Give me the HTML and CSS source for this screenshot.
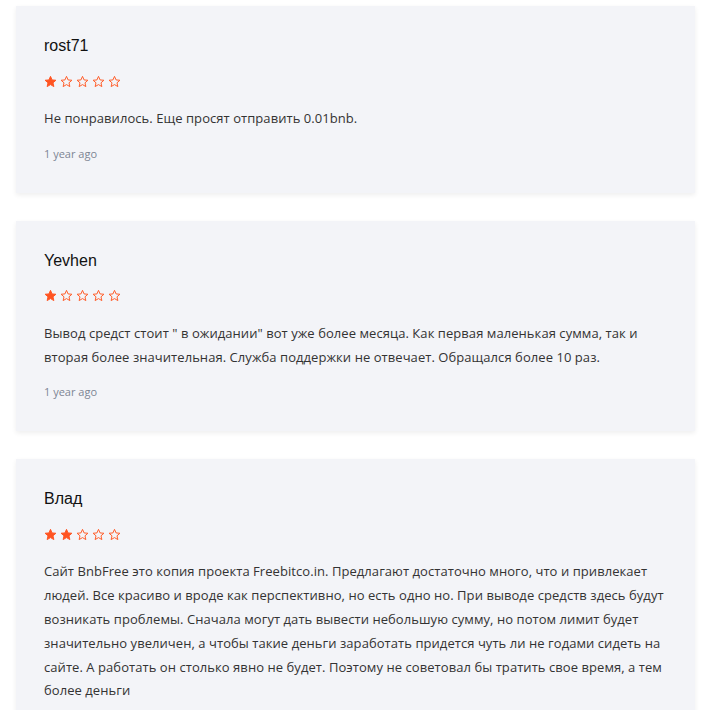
FILE: index.html
```html
<!DOCTYPE html>
<html lang="ru">
<head>
    <meta charset="UTF-8">
    <meta name="viewport" content="width=device-width, initial-scale=1.0">
    <title>Отзывы</title>
    <link rel="stylesheet" href="styles.css">
</head>
<body>

<div class="reviews">
    <div class="review">
        <div class="review-name">rost71</div>
        <div class="review-stars">
            <svg class="star on" viewBox="0 0 24 24"><path d="M12 2.5l2.9 6.6 7.1.6-5.4 4.7 1.6 7-6.2-3.7-6.2 3.7 1.6-7L2 9.7l7.1-.6z"/></svg>
            <svg class="star" viewBox="0 0 24 24"><path d="M12 2.5l2.9 6.6 7.1.6-5.4 4.7 1.6 7-6.2-3.7-6.2 3.7 1.6-7L2 9.7l7.1-.6z"/></svg>
            <svg class="star" viewBox="0 0 24 24"><path d="M12 2.5l2.9 6.6 7.1.6-5.4 4.7 1.6 7-6.2-3.7-6.2 3.7 1.6-7L2 9.7l7.1-.6z"/></svg>
            <svg class="star" viewBox="0 0 24 24"><path d="M12 2.5l2.9 6.6 7.1.6-5.4 4.7 1.6 7-6.2-3.7-6.2 3.7 1.6-7L2 9.7l7.1-.6z"/></svg>
            <svg class="star" viewBox="0 0 24 24"><path d="M12 2.5l2.9 6.6 7.1.6-5.4 4.7 1.6 7-6.2-3.7-6.2 3.7 1.6-7L2 9.7l7.1-.6z"/></svg>
        </div>
        <p class="review-text">Не понравилось. Еще просят отправить 0.01bnb.</p>
        <div class="review-date">1 year ago</div>
    </div>

    <div class="review">
        <div class="review-name">Yevhen</div>
        <div class="review-stars">
            <svg class="star on" viewBox="0 0 24 24"><path d="M12 2.5l2.9 6.6 7.1.6-5.4 4.7 1.6 7-6.2-3.7-6.2 3.7 1.6-7L2 9.7l7.1-.6z"/></svg>
            <svg class="star" viewBox="0 0 24 24"><path d="M12 2.5l2.9 6.6 7.1.6-5.4 4.7 1.6 7-6.2-3.7-6.2 3.7 1.6-7L2 9.7l7.1-.6z"/></svg>
            <svg class="star" viewBox="0 0 24 24"><path d="M12 2.5l2.9 6.6 7.1.6-5.4 4.7 1.6 7-6.2-3.7-6.2 3.7 1.6-7L2 9.7l7.1-.6z"/></svg>
            <svg class="star" viewBox="0 0 24 24"><path d="M12 2.5l2.9 6.6 7.1.6-5.4 4.7 1.6 7-6.2-3.7-6.2 3.7 1.6-7L2 9.7l7.1-.6z"/></svg>
            <svg class="star" viewBox="0 0 24 24"><path d="M12 2.5l2.9 6.6 7.1.6-5.4 4.7 1.6 7-6.2-3.7-6.2 3.7 1.6-7L2 9.7l7.1-.6z"/></svg>
        </div>
        <p class="review-text">Вывод средст стоит " в ожидании" вот уже более месяца. Как первая маленькая сумма, так и вторая более значительная. Служба поддержки не отвечает. Обращался более 10 раз.</p>
        <div class="review-date">1 year ago</div>
    </div>

    <div class="review">
        <div class="review-name">Влад</div>
        <div class="review-stars">
            <svg class="star on" viewBox="0 0 24 24"><path d="M12 2.5l2.9 6.6 7.1.6-5.4 4.7 1.6 7-6.2-3.7-6.2 3.7 1.6-7L2 9.7l7.1-.6z"/></svg>
            <svg class="star on" viewBox="0 0 24 24"><path d="M12 2.5l2.9 6.6 7.1.6-5.4 4.7 1.6 7-6.2-3.7-6.2 3.7 1.6-7L2 9.7l7.1-.6z"/></svg>
            <svg class="star" viewBox="0 0 24 24"><path d="M12 2.5l2.9 6.6 7.1.6-5.4 4.7 1.6 7-6.2-3.7-6.2 3.7 1.6-7L2 9.7l7.1-.6z"/></svg>
            <svg class="star" viewBox="0 0 24 24"><path d="M12 2.5l2.9 6.6 7.1.6-5.4 4.7 1.6 7-6.2-3.7-6.2 3.7 1.6-7L2 9.7l7.1-.6z"/></svg>
            <svg class="star" viewBox="0 0 24 24"><path d="M12 2.5l2.9 6.6 7.1.6-5.4 4.7 1.6 7-6.2-3.7-6.2 3.7 1.6-7L2 9.7l7.1-.6z"/></svg>
        </div>
        <p class="review-text">Сайт BnbFree это копия проекта Freebitco.in. Предлагают достаточно много, что и привлекает людей. Все красиво и вроде как перспективно, но есть одно но. При выводе средств здесь будут возникать проблемы. Сначала могут дать вывести небольшую сумму, но потом лимит будет значительно увеличен, а чтобы такие деньги заработать придется чуть ли не годами сидеть на сайте. А работать он столько явно не будет. Поэтому не советовал бы тратить свое время, а тем более деньги</p>
        <div class="review-date">1 year ago</div>
    </div>
</div>

</body>
</html>
```

FILE: styles.css
```css
body {
    font-family: "Open Sans", Arial, sans-serif;
    margin: 0;
    padding: 0;
    background-color: #fff;
}
.reviews {
    width: 679px;
    padding: 6px 0 0 16px;
    display: flex;
    flex-direction: column;
    gap: 28px;
}
.review {
    background-color: #f3f4f8;
    padding: 30px 28px 29px;
    box-shadow: 0 2px 5px rgba(0, 0, 0, 0.07);
}
.review-name {
    font-family: "Liberation Sans", Arial, sans-serif;
    font-size: 16px;
    line-height: 20px;
    color: #111;
}
.review-stars {
    display: flex;
    gap: 3px;
    margin-top: 18px;
    height: 14px;
    align-items: center;
}
.star {
    width: 13px;
    height: 13px;
    fill: none;
    stroke: #ff5a26;
    stroke-width: 1.8;
    stroke-linejoin: miter;
}
.star.on {
    fill: #ff5422;
    stroke: #ff5422;
}
.review-text {
    margin: 19px 0 0;
    font-size: 13px;
    line-height: 23.8px;
    letter-spacing: 0.06px;
    color: #333;
}
.review-date {
    margin-top: 13px;
    font-size: 11px;
    line-height: 20px;
    color: #7d8594;
}
```
